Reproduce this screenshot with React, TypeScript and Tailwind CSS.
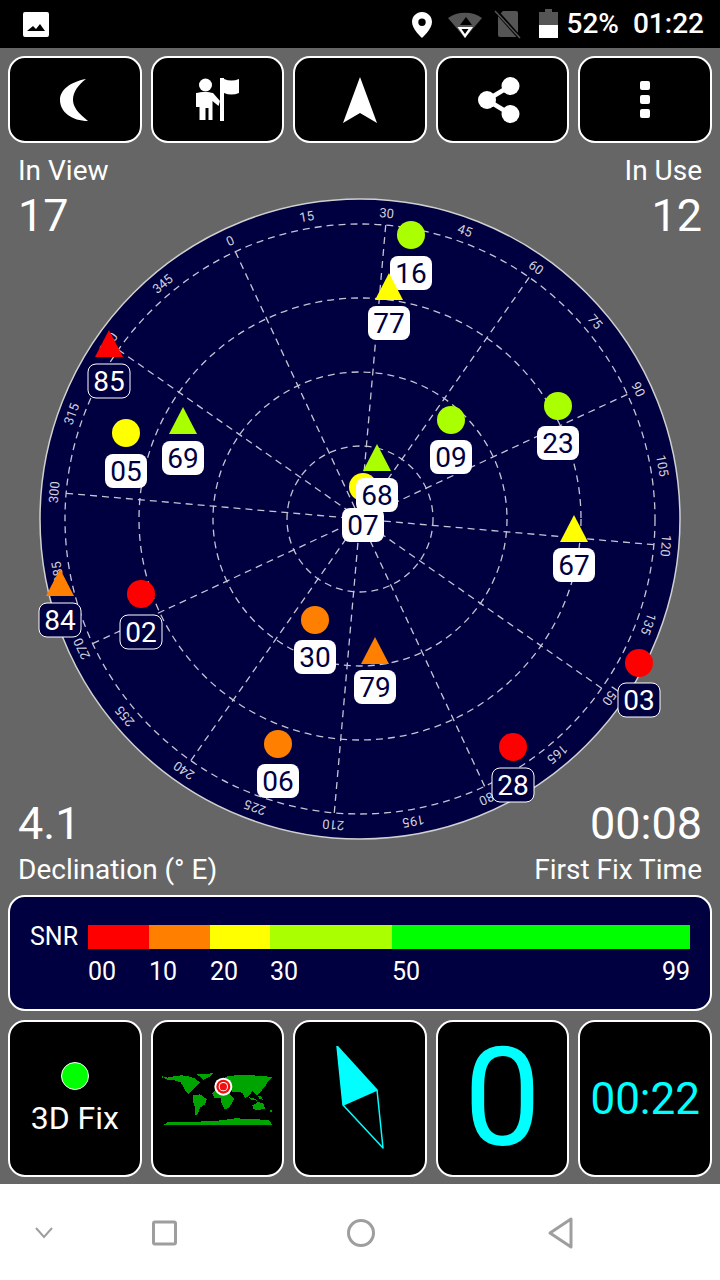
const NAVY = "#000040";
const LIME = "#aaff00";
const ORANGE = "#ff8000";

type Sat = {
  id: string;
  x: number;
  y: number;
  color: string;
  shape: "circle" | "tri";
  ly: number;
  unused?: boolean;
};

// drawn in this order, overlaps in the sky depend on it
const sats: Sat[] = [
  { id: "16", x: 411, y: 235, color: LIME, shape: "circle", ly: 273 },
  { id: "77", x: 389, y: 273, color: "#ffff00", shape: "tri", ly: 323 },
  { id: "85", x: 109, y: 330, color: "#ff0000", shape: "tri", ly: 381, unused: true },
  { id: "05", x: 126, y: 433, color: "#ffff00", shape: "circle", ly: 471 },
  { id: "69", x: 183, y: 407, color: LIME, shape: "tri", ly: 458 },
  { id: "09", x: 451, y: 420, color: LIME, shape: "circle", ly: 457 },
  { id: "23", x: 558, y: 406, color: LIME, shape: "circle", ly: 443 },
  { id: "67", x: 574, y: 515, color: "#ffff00", shape: "tri", ly: 565 },
  { id: "84", x: 60, y: 569, color: ORANGE, shape: "tri", ly: 620, unused: true },
  { id: "02", x: 141, y: 594, color: "#ff0000", shape: "circle", ly: 632, unused: true },
  { id: "30", x: 315, y: 620, color: ORANGE, shape: "circle", ly: 657 },
  { id: "79", x: 375, y: 637, color: ORANGE, shape: "tri", ly: 687 },
  { id: "06", x: 278, y: 744, color: ORANGE, shape: "circle", ly: 781 },
  { id: "28", x: 513, y: 747, color: "#ff0000", shape: "circle", ly: 785, unused: true },
  { id: "03", x: 639, y: 663, color: "#ff0000", shape: "circle", ly: 700, unused: true },
  { id: "68", x: 377, y: 444, color: LIME, shape: "tri", ly: 495 },
  { id: "07", x: 363, y: 487, color: "#ffff00", shape: "circle", ly: 525 },
];

function Marker({ s }: { s: Sat }) {
  if (s.shape === "circle") return <circle cx={s.x} cy={s.y} r={14} fill={s.color} />;
  return <polygon points={`${s.x},${s.y} ${s.x + 14},${s.y + 27} ${s.x - 14},${s.y + 27}`} fill={s.color} />;
}

function SatLabel({ s }: { s: Sat }) {
  return (
    <g>
      <rect
        x={s.x - 21}
        y={s.ly - 17}
        width={42}
        height={34}
        rx={8}
        fill={s.unused ? NAVY : "#ffffff"}
        stroke={s.unused ? "#ffffff" : "none"}
        strokeWidth={1}
      />
      <text x={s.x} y={s.ly + 10} textAnchor="middle" fontSize={28} fill={s.unused ? "#ffffff" : NAVY}>
        {s.id}
      </text>
    </g>
  );
}

function Sky() {
  const cx = 360;
  const cy = 519;
  const rot = -25;
  const spokes = Array.from({ length: 12 }, (_, i) => i * 30);
  const ticks = Array.from({ length: 24 }, (_, i) => i * 15);
  const dash = "#c4c4d4";

  return (
    <svg width={640} height={640} viewBox="40 199 640 640" className="block overflow-visible">
      <circle cx={cx} cy={cy} r={320} fill={NAVY} stroke="#d0d0d0" strokeWidth={1.5} />
      {[73, 147, 221, 295].map((r) => (
        <circle key={r} cx={cx} cy={cy} r={r} fill="none" stroke={dash} strokeWidth={1.3} strokeDasharray="7 5" />
      ))}
      {spokes.map((a) => {
        const t = ((a + rot) * Math.PI) / 180;
        return (
          <line
            key={a}
            x1={cx}
            y1={cy}
            x2={cx + 295 * Math.sin(t)}
            y2={cy - 295 * Math.cos(t)}
            stroke={dash}
            strokeWidth={1.3}
            strokeDasharray="7 5"
          />
        );
      })}
      {ticks.map((a) => (
        <text
          key={a}
          x={cx}
          y={cy - 307}
          textAnchor="middle"
          dominantBaseline="central"
          fontSize={13}
          fill="#d0d0dc"
          transform={`rotate(${a + rot} ${cx} ${cy})`}
        >
          {a}
        </text>
      ))}
      {sats.map((s) => (
        <g key={s.id}>
          {s.id === "68" && <circle cx={363} cy={487} r={14} fill="#ffff00" />}
          {s.id !== "07" && <Marker s={s} />}
          <SatLabel s={s} />
        </g>
      ))}
    </svg>
  );
}

function Tile({ children }: { children: React.ReactNode }) {
  return (
    <div className="flex items-center justify-center rounded-[17px] border-2 border-white bg-black">{children}</div>
  );
}

function StatusBar() {
  return (
    <div className="flex h-[48px] items-center justify-between bg-black pl-[23px] pr-[16px] text-white">
      <svg width={26} height={25} viewBox="0 0 26 25">
        <path
          fillRule="evenodd"
          d="M2 0h22a2 2 0 0 1 2 2v21a2 2 0 0 1-2 2H2a2 2 0 0 1-2-2V2a2 2 0 0 1 2-2zM4 19h18l-5-7-4 5-3-3z"
          fill="#fff"
        />
      </svg>
      <div className="flex items-center">
        <svg width={160} height={32} viewBox="410 8 160 32">
          <path
            fillRule="evenodd"
            d="M422 12c-5.600 0-10 4.400-10 10 0 7 10 16 10 16s10-9 10-16c0-5.600-4.400-10-10-10zm0 6.500a3.700 3.700 0 1 1 0 7.400 3.700 3.700 0 0 1 0-7.400z"
            fill="#fff"
          />
          <path d="M448 18c9-7 25-7 34 0l-17 20z" fill="#555" />
          <polygon points="460,25 466,17 472,25" fill="#000" />
          <polygon points="457.500,27 473,27 465,38" fill="#fff" />
          <polygon points="461.500,29 468.500,29 465,34" fill="#000" />
          <path d="M503 11h13a2 2 0 0 1 2 2v22a2 2 0 0 1-2 2h-16a2 2 0 0 1-2-2V16z" fill="#555" />
          <line x1={496} y1={11} x2={520} y2={38} stroke="#000" strokeWidth={4} />
          <line x1={495} y1={11} x2={520} y2={38} stroke="#555" strokeWidth={1.500} />
          <path d="M545 9h7v3h6v13h-19V12h6z" fill="#555" />
          <rect x={539} y={25} width={19} height={13} fill="#fff" />
        </svg>
        <span className="ml-[-3px] text-[28px] font-medium leading-none">52%</span>
        <span className="ml-[14px] text-[28px] font-medium leading-none">01:22</span>
      </div>
    </div>
  );
}

function Toolbar() {
  return (
    <div className="grid h-[87px] grid-cols-5 gap-[9px] pt-0">
      <Tile>
        <svg width={30} height={44} viewBox="60 78 30 44">
          <path d="M86 79C70 82 60 90 60 100c0 12 12 21 28 21-10-8-15-14-15-21 0-8 5-15 13-21z" fill="#fff" />
        </svg>
      </Tile>
      <Tile>
        <svg width={48} height={46} viewBox="194 78 48 46">
          <circle cx={206.500} cy={86} r={6.500} fill="#fff" />
          <path d="M197 94c5-1.500 13-1.500 17 0l7 8-1.500 5-6-5v19h-4v-12h-3v12h-6v-13h-3.500z" fill="#fff" />
          <rect x={221} y={79} width={4} height={43} fill="#fff" />
          <path d="M225 80c5 2 10 2 15 0v14c-5 2-10 2-15 0z" fill="#fff" />
        </svg>
      </Tile>
      <Tile>
        <svg width={34} height={46} viewBox="343 77 34 46">
          <polygon points="360,77 377,123 360,113 343,123" fill="#fff" />
        </svg>
      </Tile>
      <Tile>
        <svg width={53} height={46} viewBox="476 78 53 46">
          <path d="M510 87 487 101 510 115" fill="none" stroke="#fff" strokeWidth={4.500} />
          <circle cx={510.500} cy={87} r={9} fill="#fff" />
          <circle cx={487} cy={101} r={9} fill="#fff" />
          <circle cx={510.500} cy={115} r={9} fill="#fff" />
        </svg>
      </Tile>
      <Tile>
        <div className="flex flex-col gap-[5px]">
          <div className="h-[9px] w-[10px] rounded-[2px] bg-white" />
          <div className="h-[9px] w-[10px] rounded-[2px] bg-white" />
          <div className="h-[9px] w-[10px] rounded-[2px] bg-white" />
        </div>
      </Tile>
    </div>
  );
}

function SnrPanel() {
  const marks = [
    { t: "00", w: "w-[61px]" },
    { t: "10", w: "w-[61px]" },
    { t: "20", w: "w-[60px]" },
    { t: "30", w: "w-[122px]" },
  ];
  return (
    <div className="mt-[9px] flex h-[116px] rounded-[17px] border-2 border-white bg-[#000040] pl-[20px] pr-[20px] pt-[28px] text-white">
      <div className="w-[58px] shrink-0 text-[25px] leading-[24px]">SNR</div>
      <div className="min-w-0 flex-1">
        <div className="flex h-[24px]">
          <div className="w-[61px] bg-[#ff0000]" />
          <div className="w-[61px] bg-[#ff8000]" />
          <div className="w-[60px] bg-[#ffff00]" />
          <div className="w-[122px] bg-[#aaff00]" />
          <div className="flex-1 bg-[#00ff00]" />
        </div>
        <div className="mt-[10px] flex text-[25px] leading-[26px]">
          {marks.map((m) => (
            <span key={m.t} className={m.w}>
              {m.t}
            </span>
          ))}
          <span className="flex-1">50</span>
          <span>99</span>
        </div>
      </div>
    </div>
  );
}

function WorldMap() {
  return (
    <svg width={125} height={70} viewBox="0 0 375 210" shapeRendering="crispEdges">
      <g fill="#00a400">
        <polygon points="22,32 38,35 60,30 80,28 105,32 120,38 135,50 125,60 115,70 104,80 100,84 90,72 78,50 55,42 38,42" />
        <polygon points="125,25 175,22 165,32 145,42 135,32" />
        <polygon points="113,88 135,85 155,100 150,115 135,125 128,145 120,148 120,125 113,105" />
        <polygon points="172,82 180,72 215,70 228,88 238,98 230,112 222,125 208,130 200,112 196,95 178,95" />
        <polygon points="180,60 190,45 220,30 265,26 320,30 352,33 342,42 332,58 322,70 314,82 304,88 292,74 282,90 270,97 262,80 245,78 232,78 225,65 205,60" />
        <polygon points="292,118 310,108 325,112 330,128 310,132 295,130" />
        <polygon points="22,178 40,168 130,167 200,163 240,157 300,159 345,164 352,178" />
        <polygon points="282,94 300,98 305,104 290,102" />
        <polygon points="308,88 320,92 324,102 312,98" />
        <rect x={345} y={132} width={6} height={6} />
        <rect x={22} y={30} width={3} height={6} />
      </g>
      <circle cx={205} cy={62} r={27} fill="#fff" shapeRendering="auto" />
      <circle cx={205} cy={62} r={21} fill="#f01010" shapeRendering="auto" />
      <circle cx={205} cy={62} r={14} fill="#fff" shapeRendering="auto" />
      <circle cx={205} cy={62} r={11} fill="#f01010" shapeRendering="auto" />
    </svg>
  );
}

function Readouts() {
  return (
    <div className="mt-[9px] grid h-[157px] grid-cols-5 gap-[9px]">
      <Tile>
        <div className="flex flex-col items-center pt-[2px]">
          <div className="h-[28px] w-[28px] rounded-full border border-white bg-[#00ff00]" />
          <div className="mt-[9px] text-[32px] leading-[38px] text-white">3D Fix</div>
        </div>
      </Tile>
      <div className="flex justify-center rounded-[17px] border-2 border-white bg-black pt-[44px]">
        <WorldMap />
      </div>
      <Tile>
        <svg width={52} height={106} viewBox="334 1046 52 106">
          <polygon points="337,1046 377,1090 343,1105" fill="#00ffff" stroke="#00ffff" strokeWidth={1.500} strokeLinejoin="round" />
          <polyline points="377,1090 383,1148 343,1105" fill="none" stroke="#00ffff" strokeWidth={1.500} strokeLinejoin="round" />
        </svg>
      </Tile>
      <Tile>
        <span className="text-[137px] leading-none text-[#00ffff]">0</span>
      </Tile>
      <Tile>
        <span className="text-[44px] leading-none text-[#00ffff]">00:22</span>
      </Tile>
    </div>
  );
}

function NavBar() {
  return (
    <div className="flex h-[96px] items-center justify-center bg-white">
      <svg width={720} height={96} viewBox="0 1184 720 96">
        <polyline points="36,1228 44,1237 52,1228" fill="none" stroke="#9e9e9e" strokeWidth={2} />
        <rect x={153.500} y={1222} width={22} height={22} rx={1.500} fill="none" stroke="#9e9e9e" strokeWidth={3} />
        <circle cx={361} cy={1233} r={12.500} fill="none" stroke="#9e9e9e" strokeWidth={3} />
        <polygon points="550,1233 571,1219 571,1247" fill="none" stroke="#9e9e9e" strokeWidth={3} strokeLinejoin="round" />
      </svg>
    </div>
  );
}

export default function App() {
  return (
    <div className="flex h-[1280px] w-[720px] flex-col overflow-hidden bg-[#666666] font-['Roboto',sans-serif]">
      <StatusBar />
      <main className="flex-1 px-[8px] pt-[8px]">
        <Toolbar />
        <div className="mt-[12px] flex justify-between px-[10px] text-white">
          <div>
            <div className="text-[28px] leading-[32px]">In View</div>
            <div className="mt-[3px] text-[45px] leading-[52px]">17</div>
          </div>
          <div className="text-right">
            <div className="text-[28px] leading-[32px]">In Use</div>
            <div className="mt-[3px] text-[45px] leading-[52px]">12</div>
          </div>
        </div>
        <div className="-mt-[43px] flex justify-center">
          <Sky />
        </div>
        <div className="-mt-[41px] flex items-end justify-between px-[10px] text-white">
          <div>
            <div className="text-[45px] leading-[52px]">4.1</div>
            <div className="mt-[4px] text-[28px] leading-[32px]">Declination (° E)</div>
          </div>
          <div className="text-right">
            <div className="text-[45px] leading-[52px]">00:08</div>
            <div className="mt-[4px] text-[28px] leading-[32px]">First Fix Time</div>
          </div>
        </div>
        <SnrPanel />
        <Readouts />
      </main>
      <NavBar />
    </div>
  );
}
